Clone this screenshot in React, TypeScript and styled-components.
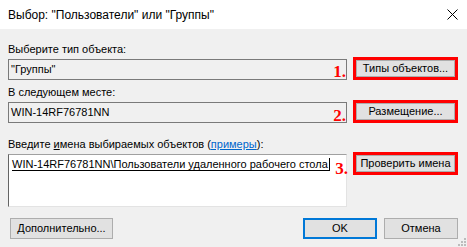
import React from "react";
import styled, { createGlobalStyle } from "styled-components";

const GlobalStyle = createGlobalStyle`
	html, body {
		margin: 0;
		padding: 0;
		background: #f0f0f0;
	}
	body {
		font-family: "Liberation Sans", Arial, sans-serif;
		font-size: 11px;
		color: #000;
	}
`;

const Window = styled.div`
	width: 467px;
	height: 247px;
	display: flex;
	flex-direction: column;
	background: #f0f0f0;
	position: relative;
	overflow: hidden;
`;

const TitleBar = styled.div`
	height: 29px;
	flex: none;
	display: flex;
	align-items: center;
	justify-content: space-between;
	padding: 0 8px 0 8px;
	background: #fff;
	font-size: 12px;
`;

const CloseIcon = styled.svg`
	width: 11px;
	height: 11px;
	margin-right: 1px;
`;

const Body = styled.div`
	display: flex;
	flex-direction: column;
	padding: 0 9px 0 8px;
`;

const Label = styled.div<{ $top: number }>`
	height: 16px;
	line-height: 16px;
	margin-top: ${(p) => p.$top}px;
	white-space: nowrap;
`;

const Row = styled.div`
	display: grid;
	grid-template-columns: 339px 105px;
	column-gap: 6px;
	align-items: start;
	position: relative;
`;

const ReadBox = styled.div`
	height: 21px;
	box-sizing: border-box;
	border: 1px solid #7a7a7a;
	background: #f0f0f0;
	padding: 0 2px;
	line-height: 19px;
	margin-top: 2px;
	position: relative;
	white-space: nowrap;
`;

const NameBox = styled.div`
	height: 53px;
	box-sizing: border-box;
	border: 1px solid #e3e3e3;
	border-top-color: #a0a0a0;
	border-left-color: #646464;
	background: #fff;
	padding: 1px 3px;
	line-height: 16px;
	margin-top: 2px;
	position: relative;
	white-space: nowrap;
`;

const Resolved = styled.span`
	border-bottom: 1px solid #000;
	border-right: 1px solid #000;
	padding-right: 1px;
`;

const Marker = styled.span<{ $bottom: number; $right: number }>`
	position: absolute;
	right: ${(p) => p.$right}px;
	bottom: ${(p) => p.$bottom}px;
	font-family: "Liberation Serif", serif;
	font-weight: bold;
	font-size: 17px;
	line-height: 17px;
	color: #f00;
`;

const RedFrame = styled.div`
	height: 23px;
	box-sizing: border-box;
	border: 3px solid #f00;
	display: flex;
`;

const Button = styled.button<{ $primary?: boolean; $width?: number }>`
	font-family: inherit;
	font-size: 11px;
	color: #000;
	background: #e1e1e1;
	border: ${(p) => (p.$primary ? "2px solid #0078d7" : "1px solid #adadad")};
	box-sizing: border-box;
	padding: 0;
	margin: 0;
	height: ${(p) => (p.$primary ? "21px" : "100%")};
	width: ${(p) => (p.$width ? `${p.$width}px` : "100%")};
	line-height: 1;
	white-space: nowrap;
	flex: none;
`;

const Footer = styled.div`
	display: flex;
	align-items: center;
	margin-top: 11px;
	padding: 0 9px 0 10px;
	height: 21px;
	gap: 7px;
`;

const Spacer = styled.div`
	flex: 1;
`;

const PlainButton = styled(Button)`
	height: 21px;
`;

const Link = styled.span`
	color: #0066cc;
	text-decoration: underline;
`;

const Accel = styled.span`
	text-decoration: underline;
`;

const Grip = styled.svg`
	position: absolute;
	right: 1px;
	bottom: 1px;
	width: 8px;
	height: 8px;
`;

export default function App() {
	return (
		<>
			<GlobalStyle />
			<Window>
				<TitleBar>
					<span>Выбор: "Пользователи" или "Группы"</span>
					<CloseIcon viewBox="0 0 11 11">
						<path d="M0.5 0.5 L10.5 10.5 M10.5 0.5 L0.5 10.5" stroke="#000" strokeWidth="1" fill="none" />
					</CloseIcon>
				</TitleBar>
				<Body>
					<Label $top={12}>Выберите тип объекта:</Label>
					<Row>
						<ReadBox>
							"Группы"
							<Marker $right={0} $bottom={-1}>1.</Marker>
						</ReadBox>
						<RedFrame>
							<Button>Типы объектов...</Button>
						</RedFrame>
					</Row>
					<Label $top={4}>В следующем месте:</Label>
					<Row>
						<ReadBox>
							WIN-14RF76781NN
							<Marker $right={0} $bottom={-2}>2.</Marker>
						</ReadBox>
						<RedFrame>
							<Button>Размещение...</Button>
						</RedFrame>
					</Row>
					<Label $top={13}>
						Введите <Accel>и</Accel>мена выбираемых объектов (<Link>примеры</Link>):
					</Label>
					<Row>
						<NameBox>
							<Resolved>WIN-14RF76781NN\Пользователи удаленного рабочего стола</Resolved>
							<Marker $right={-2} $bottom={29}>3.</Marker>
						</NameBox>
						<RedFrame>
							<Button>Проверить имена</Button>
						</RedFrame>
					</Row>
				</Body>
				<Footer>
					<PlainButton $width={103}>Дополнительно...</PlainButton>
					<Spacer />
					<PlainButton $primary $width={74}>OK</PlainButton>
					<PlainButton $width={74}>Отмена</PlainButton>
				</Footer>
				<Grip viewBox="0 0 8 8">
					<rect x="6" y="0" width="2" height="2" fill="#bcbcbc" />
					<rect x="3" y="3" width="2" height="2" fill="#bcbcbc" />
					<rect x="6" y="3" width="2" height="2" fill="#bcbcbc" />
					<rect x="0" y="6" width="2" height="2" fill="#bcbcbc" />
					<rect x="3" y="6" width="2" height="2" fill="#bcbcbc" />
					<rect x="6" y="6" width="2" height="2" fill="#bcbcbc" />
				</Grip>
			</Window>
		</>
	);
}
